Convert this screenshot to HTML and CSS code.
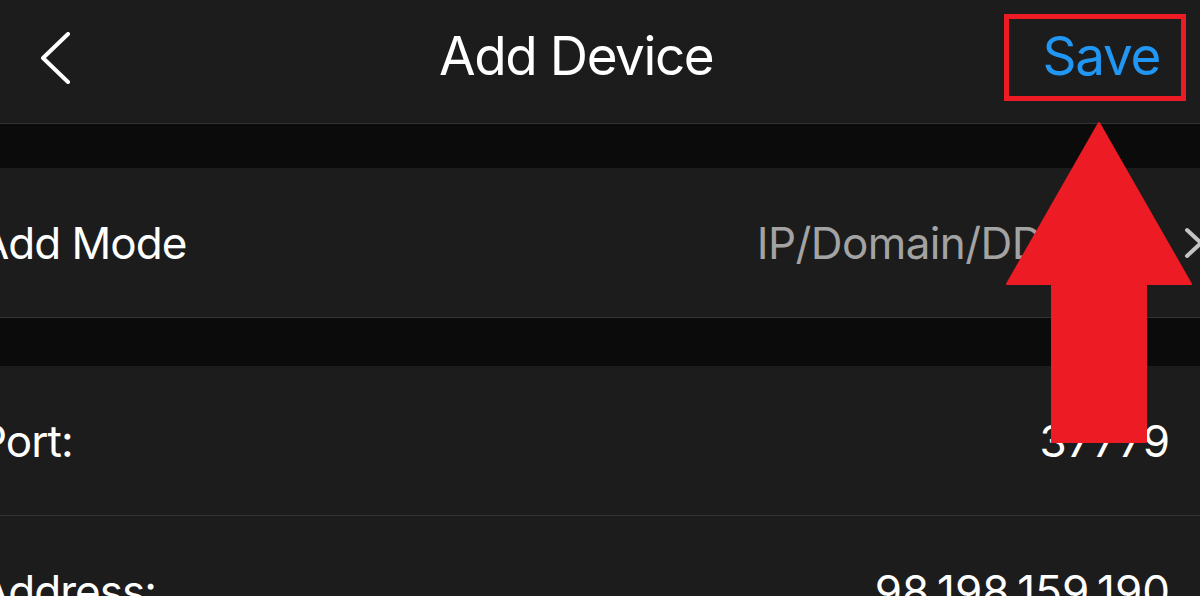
FILE: index.html
```html
<!DOCTYPE html>
<html lang="en">
<head>
<meta charset="utf-8">
<title>Add Device</title>
<link rel="stylesheet" href="styles.css">
</head>
<body>
<div class="screen">
  <header class="nav">
    <div class="nav-back">
      <svg class="back-icon" width="30" height="52" viewBox="0 0 30 52"><polyline points="27,2 2,26 27,50" fill="none" stroke="#ffffff" stroke-width="4" stroke-linecap="round" stroke-linejoin="round"/></svg>
    </div>
    <h1 class="nav-title">Add Device</h1>
    <div class="nav-spacer"></div>
    <div class="nav-save">Save</div>
  </header>
  <div class="gap gap-first"></div>
  <div class="list">
    <div class="row">
      <span class="label">Add Mode</span>
      <span class="value value-muted">IP/Domain/DDNS</span>
      <svg class="row-chevron" width="22" height="32" viewBox="0 0 22 32"><polyline points="3,3 17,16 3,29" fill="none" stroke="#c4c4c4" stroke-width="4" stroke-linecap="round" stroke-linejoin="round"/></svg>
    </div>
  </div>
  <div class="gap gap-second"></div>
  <div class="list">
    <div class="row">
      <span class="label">Port:</span>
      <span class="value">37779</span>
    </div>
    <div class="row">
      <span class="label">Address:</span>
      <span class="value">98.198.159.190</span>
    </div>
  </div>
</div>
<div class="save-highlight"></div>
<svg class="annot-arrow" width="1200" height="596" viewBox="0 0 1200 596"><polygon points="1099,123 1191,284 1146,284 1146,442 1052,442 1052,284 1007,284" fill="#ed1c24" stroke="#ed1c24" stroke-width="2" stroke-linejoin="round"/></svg>
</body>
</html>
```
FILE: styles.css
```css
html, body {
  margin: 0;
  padding: 0;
  background: #1c1c1c;
  overflow: hidden;
}
body {
  width: 1200px;
  height: 596px;
  position: relative;
  font-family: "Inter", "Roboto", sans-serif;
  color: #ffffff;
}
.screen {
  width: 1200px;
  height: 596px;
  overflow: hidden;
}
.nav {
  height: 123px;
  display: flex;
  align-items: center;
  border-bottom: 1px solid #333333;
  box-sizing: content-box;
}
.nav-back {
  width: 439px;
  padding-left: 41px;
  box-sizing: border-box;
  display: flex;
  align-items: center;
  height: 100%;
}
.back-icon {
  display: block;
  margin-bottom: 8px;
}
.nav-title {
  margin: 0 0 11px 0;
  font-size: 53px;
  font-weight: 400;
  letter-spacing: -1.4px;
  line-height: 1;
  white-space: nowrap;
}
.nav-spacer {
  flex: 1;
}
.nav-save {
  color: #2196f3;
  font-size: 53px;
  line-height: 1;
  letter-spacing: -1.3px;
  margin: 0 40px 11px 0;
}
.gap {
  background: #0b0b0b;
}
.gap-first {
  height: 44px;
}
.gap-second {
  height: 48px;
}
.list {
  margin-left: -21px;
}
.row {
  height: 150px;
  display: flex;
  align-items: center;
  font-size: 44px;
  line-height: 1;
  padding-right: 30px;
  box-sizing: border-box;
  border-bottom: 1px solid #333333;
}
.list:last-child .row:last-child {
  border-bottom: none;
}
.label {
  flex: 1;
  white-space: nowrap;
  letter-spacing: -1px;
}
.value {
  white-space: nowrap;
  letter-spacing: 0;
}
.value-muted {
  color: #a3a3a3;
  letter-spacing: -0.6px;
}
.row-chevron {
  display: block;
  margin-left: 81px;
  margin-right: -36px;
}
.save-highlight {
  position: absolute;
  left: 1004px;
  top: 14px;
  width: 182px;
  height: 87px;
  border: 5px solid #ed1c24;
  box-sizing: border-box;
}
.annot-arrow {
  position: absolute;
  left: 0;
  top: 0;
  pointer-events: none;
}
```
